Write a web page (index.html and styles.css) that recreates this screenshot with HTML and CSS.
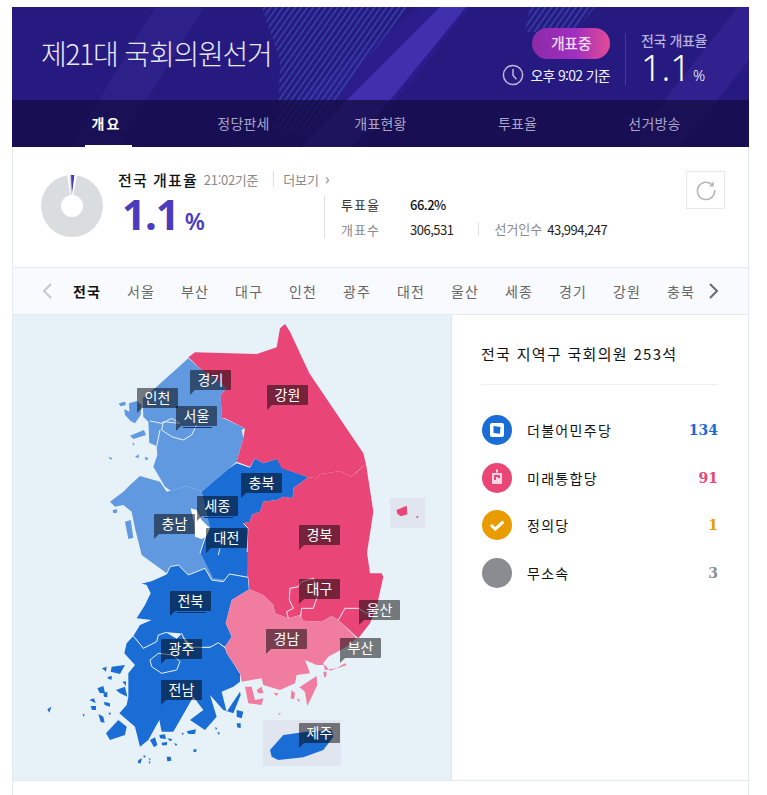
FILE: index.html
```html
<!DOCTYPE html>
<html lang="ko">
<head>
<meta charset="utf-8">
<title>제21대 국회의원선거</title>
<link rel="stylesheet" href="styles.css">
</head>
<body>
<div class="page">
  <header class="hero">
    <svg class="hero-bg" viewBox="12 7 737 140" preserveAspectRatio="none" aria-hidden="true">
      <defs>
        <pattern id="hatch" width="5" height="5" patternUnits="userSpaceOnUse" patternTransform="rotate(35)">
          <rect width="2" height="5" fill="#3f53b8" opacity=".55"/>
        </pattern>
      </defs>
      <rect x="12" y="7" width="737" height="140" fill="#261a80"/>
      <path d="M155 7H205L105 165H78L78 135Z" fill="#2d2088"/>
      <path d="M420 7H470L360 147H235Z" fill="#2c1d8c" opacity=".9"/>
      <path d="M262 7H408L312 130H278L280 60Z" fill="url(#hatch)"/>
      <path d="M440 7H466L352 147H300Z" fill="#4030ad"/>
      <path d="M530 7H595L575 32H525Z" fill="url(#hatch)"/>
      <path d="M738 7H749V60L680 147H640L645 125Z" fill="#30218f"/>
    </svg>
    <div class="hero-top">
      <h1 class="hero-title">제21대 국회의원선거</h1>
      <div class="hero-status">
        <span class="badge">개표중</span>
        <div class="time">
          <svg class="clock" viewBox="0 0 22 22" aria-hidden="true"><circle cx="11" cy="11" r="9.6"/><path d="M11 5v6.2l3.4 4"/></svg>
          <span>오후 9:02 기준</span>
        </div>
      </div>
      <div class="hero-rate">
        <div class="hero-rate-label">전국 개표율</div>
        <div class="hero-rate-value">1.1<small>%</small></div>
      </div>
    </div>
    <nav class="hero-nav">
      <a class="nav-item active">개요</a>
      <a class="nav-item">정당판세</a>
      <a class="nav-item">개표현황</a>
      <a class="nav-item">투표율</a>
      <a class="nav-item">선거방송</a>
    </nav>
  </header>

  <section class="summary">
    <svg class="donut" viewBox="0 0 62 62" aria-hidden="true">
      <circle cx="31" cy="31" r="31" fill="#d9dddf"/>
      <path d="M31 31L31 0A31 31 0 0 1 33 0Z" fill="#fff" transform="rotate(-9 31 31)"/>
      <path d="M31 20L30 0H33.6Z" fill="#4b3bbd" />
      <path d="M33.6 0H36L32.4 20H31Z" fill="#fff"/>
      <circle cx="31" cy="31" r="11" fill="#fff"/>
    </svg>
    <div class="summary-main">
      <div class="summary-head">
        <strong>전국 개표율</strong>
        <span class="stamp">21:02기준</span>
        <a class="more">더보기 <i>›</i></a>
      </div>
      <div class="summary-body">
        <div class="big-rate">1.1<small>%</small></div>
        <dl class="stats">
          <div class="stat-row"><dt class="dark">투표율</dt><dd class="bold">66.2%</dd></div>
          <div class="stat-row"><dt>개표수</dt><dd>306,531</dd><dt class="stat-sep">선거인수</dt><dd class="stat-last">43,994,247</dd></div>
        </dl>
      </div>
    </div>
    <button class="refresh" aria-label="새로고침">
      <svg viewBox="0 0 22 22" aria-hidden="true"><path d="M17.5 6.2A8.6 8.6 0 1 0 19.6 11"/><path class="tip" d="M18.8 2.4v5h-5z"/></svg>
    </button>
  </section>

  <div class="tabs">
    <svg class="arrow" viewBox="0 0 12 18" aria-hidden="true"><path d="M10 2L3 9l7 7" stroke="#c4c8ce"/></svg>
    <ul class="tab-list">
      <li class="on">전국</li><li>서울</li><li>부산</li><li>대구</li><li>인천</li><li>광주</li><li>대전</li><li>울산</li><li>세종</li><li>경기</li><li>강원</li><li>충북</li>
    </ul>
    <svg class="arrow" viewBox="0 0 12 18" aria-hidden="true"><path d="M2 2l7 7-7 7" stroke="#666b72"/></svg>
  </div>

  <section class="main">
    <div class="map">
      <svg class="map-svg" viewBox="13 315 439 465" aria-hidden="true">
        <rect x="263" y="720" width="78" height="46" fill="#e0e5ef"/>
        <rect x="390" y="498" width="35" height="30" fill="#e0e5ef"/>
        <g class="rg" transform="translate(100 315) scale(.33333)">
          <path class="lb" d="M265 130L305 165 345 190 380 220 362 240 365 310 375 312 435 340 425 345 430 370 410 440 385 462 305 530 262 513 212 527 195 515 180 490 160 455 172 420 170 395 148 385 145 320 130 305 128 250 170 215Z"/>
          <path class="lb" d="M120 483L180 500 200 530 262 513 305 530 330 640 310 660 350 720 380 800 330 800 235 800 125 720 105 640 95 590 70 570 45 575 30 560 70 530 90 510Z"/>
          <path class="bl" d="M410 445L450 458 465 430 490 445 530 432 545 437 550 460 625 487 580 520 578 550 550 545 530 555 490 560 480 590 455 600 450 620 430 625 445 640 440 710 452 716 500 720 440 800 340 790 300 710 320 660 330 640 305 530 385 462Z"/>
          <path class="pk" d="M265 127L285 112 470 117 530 97 540 40 555 27 570 50 628 175 790 415 798 447 770 470 755 485 720 468 660 478 650 490 625 487 545 460 530 432 490 445 465 430 450 455 410 440 430 370 435 340 375 310 365 310 362 240 380 220 345 190 305 165Z"/>
          <path class="pk" d="M625 487L650 490 660 478 720 468 755 485 798 447 820 590 800 720 810 800 440 800 445 640 430 625 450 620 455 600 480 590 490 560 530 555 550 545 578 550 580 520Z"/>
          <path class="pk" d="M890 585L920 572 922 598 903 604 892 596Z"/>
          <circle class="pk" cx="952" cy="606" r="3"/>
          <path class="wh" d="M272 580L290 585 305 615 330 640 318 665 305 672 285 665 282 620Z"/>
          <path class="ln" d="M150 318L170 322 185 325 215 310 240 325 190 320 185 345 215 365 250 375 275 360 290 330"/>
          <path class="ln" d="M148 385L170 395 180 345M300 715L318 660M360 700L355 720M430 625L445 640"/>
          <path class="bl" d="M56 265L75 260 78 270 62 274ZM87 265L110 258 125 270 122 300 105 325 92 318 75 300 73 282 88 290Z" fill="#6199e0" style="fill:#6199e0"/>
          <path class="lb" d="M90 362L132 345 138 360 100 372ZM96 382L104 388 100 392ZM26 425L38 430 32 434ZM105 425L116 418 116 430ZM134 425L146 430 138 437ZM75 620L92 615 100 668 85 672ZM38 585L52 583 50 594 40 594Z"/>
        </g>
        <g class="rg" transform="translate(30 550) scale(.33333)">
          <path class="bl" d="M333 100L365 92 410 72 420 50 445 45 475 75 525 55 545 90 580 95 598 72 655 82 658 118 605 150 587 220 605 260 585 290 565 280 545 290 490 292 450 250 410 247 385 255 380 275 340 295 310 258 330 225 365 210 320 205 345 165 362 130 350 105Z"/>
          <path class="bl" d="M310 258L340 295 380 275 385 255 410 247 440 265 455 250 470 285 490 292 540 292 565 278 585 293 590 310 630 370 630 395 610 410 575 425 590 485 630 425 632 435 610 490 580 480 540 435 560 500 525 540 480 510 520 480 490 440 430 545 395 545 388 510 355 570 330 590 315 530 268 490 290 465 295 440 295 370 315 345 283 310 290 280Z"/>
          <path class="ln" d="M360 330L385 310 430 315 450 335 440 360 395 370 365 350Z"/>
          <path class="ln" d="M310 258L340 295 380 275 385 255 410 247 440 265 455 250 470 285 490 292 540 292 565 278 585 293 630 370"/>
          <path class="ln" d="M333 100L365 92 410 72 420 50 445 45 475 75 525 55 545 90 580 95 598 72 655 82 658 118"/>
          <path class="pk" d="M655 82L695 20 680 0 1010 0 1020 70 1055 70 1060 80 1040 170 1020 220 985 265 925 210 905 198 875 215 820 212 810 195 775 205 735 190 730 165 700 135 658 118Z"/>
          <path class="pl" d="M658 118L700 135 730 165 735 190 775 205 810 195 820 212 875 215 905 198 925 210 980 265 950 290 895 320 880 340 885 360 920 355 945 340 950 345 900 362 885 345 860 345 825 330 840 370 800 375 795 400 750 420 700 405 695 385 635 395 630 370 590 310 585 290 605 260 587 220 605 150Z"/>
          <path class="pl" d="M645 410L665 410 675 450 700 445 695 465 655 460ZM680 420L695 410 700 430 685 430ZM808 412L860 378 862 405 832 468 825 425ZM880 365L890 365 888 382 882 380ZM785 420L795 430 792 448 782 445ZM730 428L745 430 740 438ZM800 445L810 450 806 456ZM745 490L752 490 750 496Z"/>
          <path class="ln" d="M775 205L770 185 790 175 778 150 780 115 805 110 815 95 850 85 865 130 850 175 815 175 812 200"/>
          <path class="ln" d="M925 210L945 175 985 175 1010 190 1040 175"/>
          <path class="bl" d="M720 600L760 555 830 545 905 540 910 560 880 600 820 622 745 630 725 620Z"/>
          <path class="bl" d="M228 550L265 510 290 530 285 555 240 570ZM216 355L230 350 228 365ZM245 350L285 345 270 372 242 365ZM235 380L246 378 244 390 232 385ZM202 415L220 408 225 428 210 430ZM220 430L232 425 232 442 222 440ZM178 450L192 445 197 460ZM182 468L198 468 198 480 186 480ZM222 455L240 460 240 470 224 465ZM205 492L220 500 224 518 212 516ZM235 488L243 488 240 496ZM258 420L285 410 292 440 270 430ZM277 395L288 394 288 408ZM52 478L64 470 58 488ZM158 492L165 494 160 500ZM620 480L640 485 635 505 620 500ZM620 520L632 520 632 535 622 532ZM360 570L375 562 382 585 372 592ZM388 555L405 553 408 567 390 565ZM395 578L412 576 410 586 396 586ZM412 565L428 568 420 574ZM432 580L442 582 438 588ZM455 548L462 550 458 556ZM470 544L498 538 495 552 475 552ZM555 532L562 534 558 540ZM562 546L570 548 566 555ZM490 598L500 598 498 606 491 606ZM325 630L336 625 332 640 324 640ZM340 616L348 618 342 624ZM356 625L362 626 360 632ZM356 634L362 636 358 642ZM410 620L422 620 424 632 412 634Z"/>
        </g>
      </svg>
      <span class="pin p-gyeonggi">경기</span>
      <span class="pin p-incheon">인천</span>
      <span class="pin p-seoul ul">서울</span>
      <span class="pin p-gangwon">강원</span>
      <span class="pin p-chungbuk">충북</span>
      <span class="pin p-sejong ul">세종</span>
      <span class="pin p-chungnam">충남</span>
      <span class="pin p-daejeon">대전</span>
      <span class="pin p-gyeongbuk">경북</span>
      <span class="pin p-daegu">대구</span>
      <span class="pin p-ulsan">울산</span>
      <span class="pin p-jeonbuk ul">전북</span>
      <span class="pin p-gyeongnam">경남</span>
      <span class="pin p-busan">부산</span>
      <span class="pin p-gwangju">광주</span>
      <span class="pin p-jeonnam">전남</span>
      <span class="pin p-jeju">제주</span>
    </div>
    <aside class="seats">
      <h2 class="seats-title">전국 지역구 국회의원 253석</h2>
      <ul class="party-list">
        <li class="party">
          <svg class="party-icon" viewBox="0 0 30 30" aria-hidden="true"><circle cx="15" cy="15" r="15" fill="#1a6dd4"/><rect x="8" y="8" width="14" height="14" rx="2" fill="#fff"/><path d="M11.5 11L18.5 12 18 18.8 11.5 18Z" fill="#1a6dd4"/></svg>
          <span class="party-name">더불어민주당</span><b class="num n-blue">134</b>
        </li>
        <li class="party">
          <svg class="party-icon" viewBox="0 0 30 30" aria-hidden="true"><circle cx="15" cy="15" r="15" fill="#ea4577"/><path d="M14 6.500h2v3h-2zM10 10h10v7h-6v-3h2v1h2v-3h-6v5h8v4H10z" fill="#fbd6e1"/></svg>
          <span class="party-name">미래통합당</span><b class="num n-pink">91</b>
        </li>
        <li class="party">
          <svg class="party-icon" viewBox="0 0 30 30" aria-hidden="true"><circle cx="15" cy="15" r="15" fill="#e99c00"/><path d="M9 15l4.300 4.200 8-7.600" fill="none" stroke="#fff" stroke-width="3"/></svg>
          <span class="party-name">정의당</span><b class="num n-orange">1</b>
        </li>
        <li class="party">
          <svg class="party-icon" viewBox="0 0 30 30" aria-hidden="true"><circle cx="15" cy="15" r="15" fill="#8b8c91"/></svg>
          <span class="party-name">무소속</span><b class="num n-gray">3</b>
        </li>
      </ul>
    </aside>
  </section>
  <div class="tail"></div>
</div>
</body>
</html>
```

FILE: styles.css
```css
* { box-sizing: border-box; }
html, body { margin: 0; padding: 0; background: #fff; }
body { font-family: "Noto Sans CJK KR", "Noto Sans", sans-serif; color: #222; overflow: hidden; height: 795px; }
.page { width: 737px; margin: 7px 0 0 12px; }
ul, dl, dd, h1, h2 { margin: 0; padding: 0; list-style: none; }

.hero { position: relative; height: 140px; color: #fff; overflow: hidden; }
.hero-bg { position: absolute; inset: 0; width: 100%; height: 100%; }
.hero-top { position: relative; height: 93px; display: flex; align-items: flex-start; }
.hero-title { font-size: 28px; font-weight: 300; letter-spacing: -1.2px; color: #ebe9f7; margin: 26px 0 0 29px; line-height: 40px; width: 448px; white-space: nowrap; }
.hero-status { width: 121px; display: flex; flex-direction: column; align-items: flex-end; padding-top: 21px; }
.badge { width: 78px; height: 31px; border-radius: 16px; background: linear-gradient(90deg, #8b2ba8, #a12ec0 55%, #e34b95); font-size: 15px; font-weight: 500; color: #eadcf3; text-align: center; line-height: 30px; letter-spacing: -.5px; }
.time { display: flex; align-items: center; gap: 6px; font-size: 14px; letter-spacing: -.7px; height: 22px; margin-top: 5px; white-space: nowrap; color: #f3f1fb; }
.clock { width: 22px; height: 22px; flex: none; fill: none; stroke: #bdb8d8; stroke-width: 1.5; }
.hero-rate { margin: 26px 0 0 15px; border-left: 1px solid #46389c; height: 52px; padding-left: 15px; }
.hero-rate-label { font-size: 14px; font-weight: 500; color: #b6addf; margin-top: -2px; line-height: 18px; letter-spacing: -.4px; white-space: nowrap; }
.hero-rate-value { font-size: 36px; line-height: 40px; font-weight: 300; font-family: "Noto Sans", sans-serif; white-space: nowrap; margin-top: -1px; }
.hero-rate-value small { font-size: 15px; margin-left: 2px; }
.hero-nav { position: relative; height: 47px; background: rgba(20, 12, 70, .78); display: grid; grid-template-columns: repeat(5, 137px); padding-left: 26px; }
.nav-item { position: relative; text-align: center; font-size: 14px; line-height: 46px; color: #a9a4c9; letter-spacing: .2px; }
.nav-item.active { color: #fff; font-weight: 700; letter-spacing: 2px; }
.nav-item.active::after { content: ""; position: absolute; left: 47px; width: 47px; bottom: 0; height: 2px; background: #fff; }

.summary { height: 121px; display: flex; align-items: flex-start; border-left: 1px solid #e4e9f2; border-right: 1px solid #e4e9f2; padding: 28px 0 0 28px; border-bottom: 1px solid #e4e9f2; }
.donut { width: 62px; height: 62px; flex: none; }
.summary-main { margin: -6px 0 0 15px; width: 510px; }
.summary-head { display: flex; align-items: center; height: 20px; }
.summary-head strong { font-size: 15px; font-weight: 500; letter-spacing: 1.1px; color: #111; }
.stamp { font-size: 13px; color: #8a8a8a; margin-left: 6px; letter-spacing: -.3px; }
.more { font-size: 13px; color: #8a8a8a; margin-left: 15px; padding-left: 9px; border-left: 1px solid #dfdfdf; line-height: 14px; }
.more i { font-style: normal; font-size: 16px; margin-left: 2px; }
.summary-body { display: flex; margin-top: 3px; }
.big-rate { width: 206px; padding-left: 4px; font: 700 42px/44px "Noto Sans", sans-serif; color: #4b3bbd; letter-spacing: -1px; }
.big-rate small { font-size: 23px; font-weight: 600; margin-left: 6px; letter-spacing: 0; }
.stats { border-left: 1px solid #e0e0e0; padding-left: 16px; height: 43px; margin: 3px 0 0 0; display: flex; flex-direction: column; justify-content: space-between; }
.stat-row { display: flex; align-items: center; height: 18px; font-size: 13px; }
dt { width: 69px; color: #8b8b8b; letter-spacing: 1px; }
dt.dark { color: #333; }
dd { font-size: 13px; color: #222; letter-spacing: -.5px; }
dd.bold { font-weight: 500; color: #111; }
dt.stat-sep { width: auto; border-left: 1px solid #e0e0e0; margin-left: 25px; padding-left: 15px; line-height: 14px; letter-spacing: 0; }
.stat-last { margin-left: 5px; }
.refresh { margin-left: auto; margin-right: 23px; margin-top: -4px; width: 39px; height: 38px; background: #fff; border: 1px solid #e8e8ea; padding: 7px 8px; }
.refresh svg { display: block; width: 22px; height: 22px; fill: none; stroke: #b7b7b7; stroke-width: 1.6; }
.refresh .tip { fill: #b7b7b7; stroke: none; }

.tabs { height: 47px; background: #f8fafd; border: 1px solid #e4e9f2; border-top: 0; display: flex; align-items: center; padding-left: 28px; }
.arrow { width: 12px; height: 18px; flex: none; fill: none; stroke-width: 2; }
.tab-list { display: flex; margin-left: 7px; width: 637px; overflow: hidden; flex: none; }
.tab-list li { flex: 0 0 54px; text-align: center; font-size: 14px; letter-spacing: 1px; color: #666; white-space: nowrap; line-height: 44px; }
.tab-list li:first-child { flex-basis: 54px; }
.tab-list li.on { color: #111; font-weight: 700; }
.tabs .arrow:last-child { margin-left: 11px; }

.main { display: flex; height: 466px; border: 1px solid #e4e9f2; border-top: 0; }
.map { position: relative; width: 439px; flex: none; background: #e7f1f8; border-right: 1px solid #dfe7f0; }
.map-svg { position: absolute; left: 0; top: 0; width: 439px; height: 465px; }
.rg path, .rg circle { stroke-linejoin: round; }
.lb { fill: #6199e0; }
.bl { fill: #1a6dd4; }
.pk { fill: #ea4577; }
.pl { fill: #f07d9f; }
.wh { fill: #fff; }
.ln { fill: none; stroke: #e9f0fa; stroke-width: 3; }

.pin { position: absolute; width: 41px; height: 20px; background: rgba(0, 0, 0, .5); border-radius: 1px; color: #fff; font-size: 14px; line-height: 19px; text-align: center; letter-spacing: .2px; }
.pin::before { content: ""; position: absolute; left: 0; top: 100%; border-top: 5px solid rgba(0, 0, 0, .5); border-right: 5px solid transparent; }
.pin.ul::after { content: ""; position: absolute; left: 7px; right: 5px; top: 100%; height: 1px; margin-top: 1px; background: rgba(10, 40, 100, .9); }
.p-gyeonggi { left: 177px; top: 55px; }
.p-incheon { left: 124px; top: 73px; }
.p-seoul { left: 163px; top: 91px; }
.p-gangwon { left: 254px; top: 70px; }
.p-chungbuk { left: 228px; top: 158px; }
.p-sejong { left: 184px; top: 181px; }
.p-chungnam { left: 141px; top: 199px; }
.p-daejeon { left: 193px; top: 213px; }
.p-gyeongbuk { left: 286px; top: 210px; }
.p-daegu { left: 286px; top: 264px; }
.p-ulsan { left: 346px; top: 285px; }
.p-jeonbuk { left: 157px; top: 276px; }
.p-gyeongnam { left: 253px; top: 314px; }
.p-busan { left: 327px; top: 323px; }
.p-gwangju { left: 148px; top: 324px; }
.p-jeonnam { left: 148px; top: 365px; }
.p-jeju { left: 286px; top: 408px; }

.seats { flex: 1; padding: 28px 30px 0 30px; }
.seats-title { font-size: 15px; font-weight: 400; letter-spacing: 1.3px; line-height: 22px; color: #111; white-space: nowrap; border-bottom: 1px solid #eef0f6; height: 42px; margin-left: -1px; }
.party-list { margin-top: 21px; }
.party { display: flex; align-items: center; height: 47.700px; }
.party-icon { width: 30px; height: 30px; flex: none; }
.party-name { margin-left: 15px; font-size: 14px; letter-spacing: 1.3px; color: #111; }
.num { margin-left: auto; font: 700 14px/1 "DejaVu Serif", serif; }
.n-blue { color: #1a6dd4; }
.n-pink { color: #ea4577; }
.n-orange { color: #e99c00; }
.n-gray { color: #8b8c91; }
.tail { height: 15px; border-left: 1px solid #e4e9f2; border-right: 1px solid #e4e9f2; }
```
